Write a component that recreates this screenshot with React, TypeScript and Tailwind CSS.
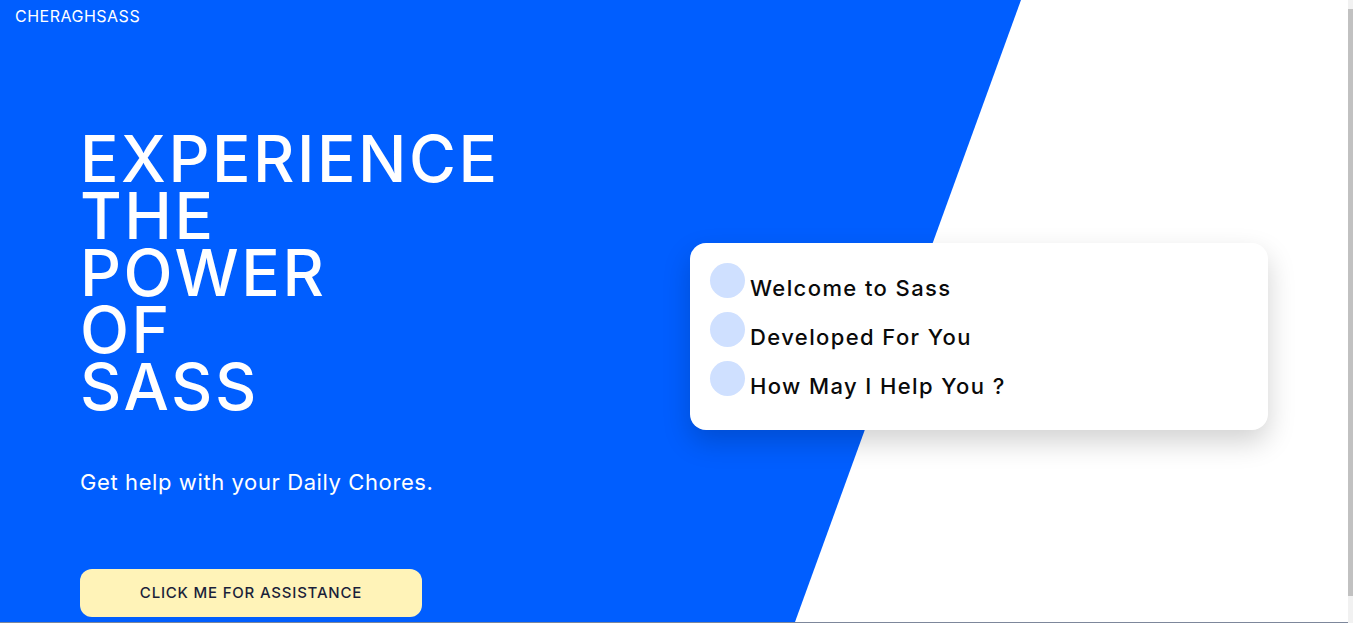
import React from 'react'

const messages = ['Welcome to Sass', 'Developed For You', 'How May I Help You ?']

const headline = ['EXPERIENCE', 'THE', 'POWER', 'OF', 'SASS']

const App = () => {
  return (
    <div className="flex w-full h-[623px] overflow-hidden bg-white font-['Inter',sans-serif]">
      <div className="flex-1 flex flex-col">
        <section className="relative flex-1 flex flex-col">
          {/* diagonal blue backdrop */}
          <div className="absolute inset-0 bg-[#005eff] [clip-path:polygon(0_0,1021px_0,795px_100%,0_100%)]" />

          <header className="relative px-[15px] pt-[4px]">
            <span className="text-white text-[16px] tracking-[0.5px]">CHERAGHSASS</span>
          </header>

          <div className="relative flex-1 flex items-start justify-between px-20">
            <div className="flex flex-col pt-[102px]">
              <h1 className="text-white text-[64px] leading-[57px] font-medium tracking-[2.5px]">
                {headline.map((line) => (
                  <span key={line} className="block">
                    {line}
                  </span>
                ))}
              </h1>
              <p className="mt-[51px] text-white text-[22px] tracking-[0.6px]">
                Get help with your Daily Chores.
              </p>
              <button className="mt-[70px] w-[342px] h-[48px] rounded-xl bg-[#fff3b8] text-[#1b1f3a] text-[15px] font-medium tracking-[0.8px]">
                CLICK ME FOR ASSISTANCE
              </button>
            </div>

            <div className="mt-[215px] w-[578px] h-[187px] rounded-2xl bg-white shadow-[0_12px_28px_rgba(0,0,0,0.18)] px-5 pt-5">
              {messages.map((msg) => (
                <div key={msg} className="h-[49px] leading-[49px]">
                  <span className="inline-block align-[-2px] w-[35px] h-[35px] rounded-full bg-[#cfe0ff]" />
                  <span className="ml-[5px] text-[22px] font-medium tracking-[1.4px] text-[#0a0a0a]">{msg}</span>
                </div>
              ))}
            </div>
          </div>
        </section>
        <div className="h-px bg-[#7d879b]" />
      </div>

      <div className="w-[5px] bg-[#f1f1f1] pt-[9px]">
        <div className="h-[587px] bg-[#c1c1c1]" />
      </div>
    </div>
  )
}

export default App
